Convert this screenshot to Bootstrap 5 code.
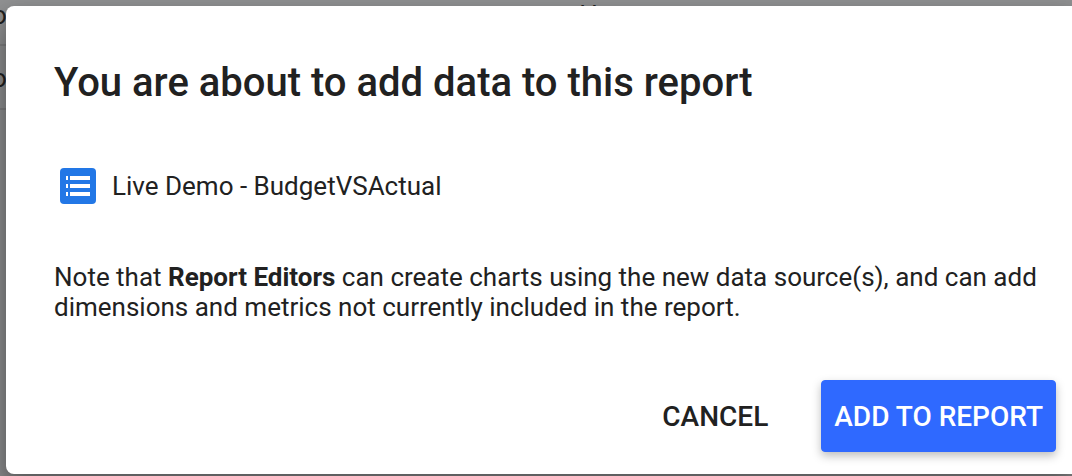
<!DOCTYPE html>
<html lang="en">
<head>
<meta charset="utf-8">
<meta name="viewport" content="width=device-width, initial-scale=1">
<title>Add data to report</title>
<link href="https://cdn.jsdelivr.net/npm/bootstrap@5.3.0/dist/css/bootstrap.min.css" rel="stylesheet">
<style>
  body { font-family: Roboto, "Liberation Sans", sans-serif; font-size: 26px; line-height: 30px; color: #212121; background: #909192; }
  .stage { padding: 6px 0 2px 6px; }
  .page-behind { z-index: 0; }
  .source-row { height: 64px; margin-left: -8px; padding-top: 17px; border-bottom: 2px solid #808182; }
  .source-row:first-child { height: 46px; padding-top: 0; }
  .owner-cell { margin-left: 53%; }
  .dialog-panel { z-index: 1; padding: 51px 16px 22px 48px; border-radius: 8px 0 0 8px; box-shadow: 0 22px 30px 6px rgba(0,0,0,.28), 0 4px 16px rgba(0,0,0,.14); }
  .dialog-title { font-size: 40px; line-height: 52px; font-weight: 500; }
  .source-item { margin: 59px 6px 0; gap: 16px; }
  .dialog-note { margin: 58px 0 0; }
  .dialog-actions { margin-top: 58px; gap: 40px; }
  .action { --bs-btn-font-size: 28px; --bs-btn-font-weight: 500; --bs-btn-line-height: 32px; --bs-btn-padding-x: 12px; --bs-btn-border-radius: 4px; --bs-btn-color: #212121; padding-top: 20px; padding-bottom: 18px; }
  .action-primary { --bs-btn-color: #fff; --bs-btn-bg: #2f69ff; --bs-btn-border-color: #2f69ff; --bs-btn-hover-bg: #245be8; --bs-btn-hover-color: #fff; box-shadow: 0 4px 10px rgba(0,0,0,.26); }
</style>
</head>
<body>
<div class="stage position-relative overflow-hidden">
  <ul class="page-behind list-unstyled position-absolute top-0 start-0 w-100 m-0" aria-hidden="true">
    <li class="source-row d-flex"><span>o</span><span class="owner-cell">H</span></li>
    <li class="source-row">o</li>
  </ul>
  <div class="dialog-panel bg-white position-relative" role="dialog" aria-labelledby="dialog-title">
    <h1 class="dialog-title m-0" id="dialog-title">You are about to add data to this report</h1>
    <div class="source-item d-flex align-items-center">
      <svg width="36" height="36" viewBox="0 0 36 36" aria-hidden="true">
        <rect width="36" height="36" rx="4" fill="#2277e6"/>
        <path fill="#fff" d="M6 8h2v4H6zM10 8h20v4H10zM6 16h2v4H6zM10 16h20v4H10zM6 24h2v4H6zM10 24h20v4H10z"/>
      </svg>
      <span class="source-name">Live Demo - BudgetVSActual</span>
    </div>
    <p class="dialog-note">Note that <strong>Report Editors</strong> can create charts using the new data source(s), and can add dimensions and metrics not currently included in the report.</p>
    <div class="dialog-actions d-flex justify-content-end">
      <button type="button" class="btn action">CANCEL</button>
      <button type="button" class="btn action action-primary">ADD TO REPORT</button>
    </div>
  </div>
</div>
<script src="https://cdn.jsdelivr.net/npm/bootstrap@5.3.0/dist/js/bootstrap.bundle.min.js"></script>
</body>
</html>
